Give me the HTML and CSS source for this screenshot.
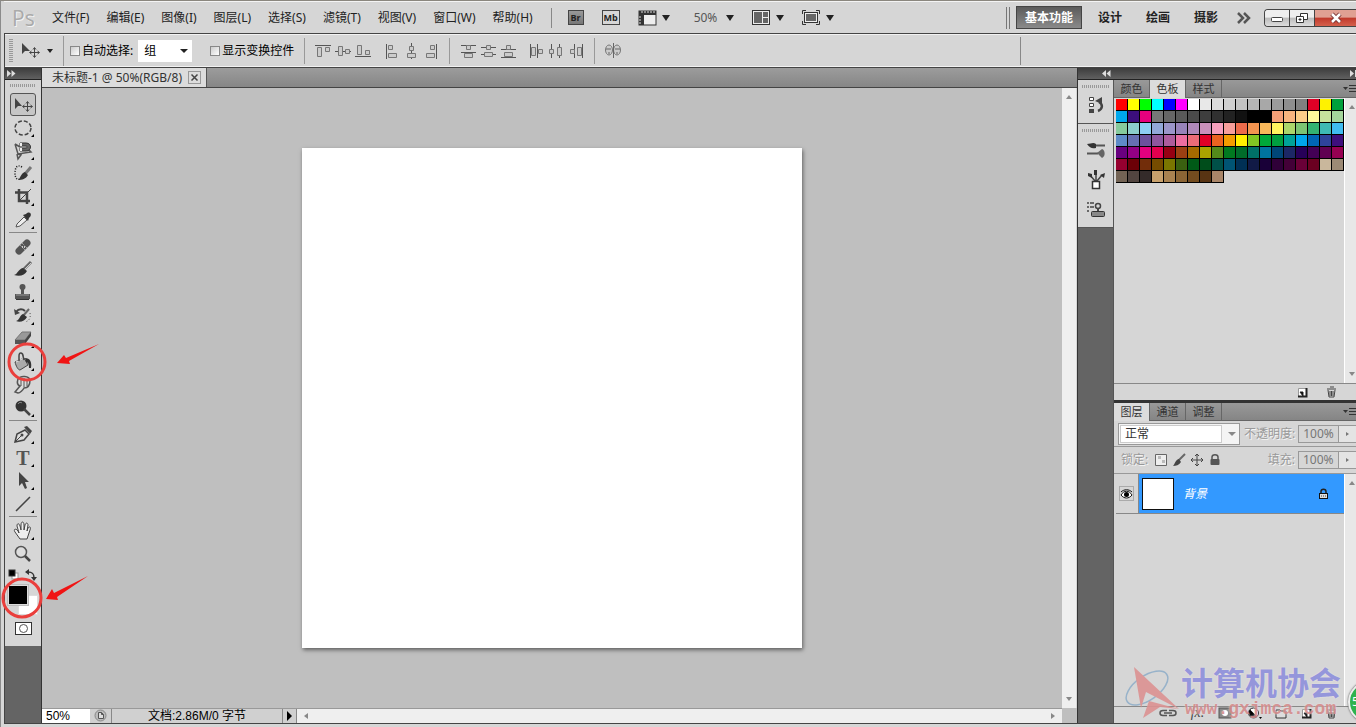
FILE: index.html
```html
<!DOCTYPE html>
<html lang="zh-CN">

<head>
    <meta charset="UTF-8">
    <meta name="viewport" content="width=device-width, initial-scale=1.0">
    <title>未标题-1 @ 50%(RGB/8)</title>

    <link rel="stylesheet" href="styles.css">
</head>

<body>
    <header class="menubar">
        <span class="logo">Ps</span>
        <nav class="menu">
            <a href="#">文件(F)</a>
            <a href="#">编辑(E)</a>
            <a href="#">图像(I)</a>
            <a href="#">图层(L)</a>
            <a href="#">选择(S)</a>
            <a href="#">滤镜(T)</a>
            <a href="#">视图(V)</a>
            <a href="#">窗口(W)</a>
            <a href="#">帮助(H)</a>
        </nav>
        <div class="app-buttons">
            <button class="app-box br">Br</button>
            <button class="app-box mb">Mb</button>
            <button class="drop" aria-label="查看额外内容">
                <svg width="19" height="16" viewBox="0 0 19 16"><rect x="1" y="1" width="17" height="14" fill="#eee" stroke="#333"/><path d="M1 1h17v4H6v10H1z" fill="#333"/><path d="M4 1v2M7 1v2M10 1v2M13 1v2M16 1v2M1 7h2M1 10h2M1 13h2" stroke="#ddd"/></svg>
                <i class="tri"></i>
            </button>
            <button class="drop zoom-level">50% <i class="tri"></i></button>
            <button class="drop" aria-label="排列文档">
                <svg width="19" height="16" viewBox="0 0 19 16"><rect x=".5" y=".5" width="17" height="14" fill="#eee" stroke="#333"/><path d="M2 2h8v11H2zM11 2h5v5h-5zM11 8h5v5h-5z" fill="#666"/></svg>
                <i class="tri"></i>
            </button>
            <button class="drop" aria-label="屏幕模式">
                <svg width="19" height="16" viewBox="0 0 19 16"><path d="M4 .5H.5V4M14 .5h3.500V4M.5 11v3.500H4M17.500 11v3.500H14" fill="none" stroke="#333"/><rect x="2.500" y="2.500" width="13" height="10" fill="#eee" stroke="#333"/><rect x="4" y="4" width="10" height="7" fill="#666"/></svg>
                <i class="tri"></i>
            </button>
        </div>
        <div class="workspaces">
            <button class="active">基本功能</button>
            <button>设计</button>
            <button>绘画</button>
            <button>摄影</button>
            <button class="more" aria-label="更多">
                <svg width="14" height="12" viewBox="0 0 14 12"><path d="M1 1l5 5-5 5M7 1l5 5-5 5" fill="none" stroke="#555" stroke-width="2.500"/></svg>
            </button>
        </div>
        <div class="window-buttons">
            <button aria-label="最小化"><svg width="14" height="12" viewBox="0 0 14 12"><rect x="1.500" y="5.500" width="11" height="4" rx="1" fill="#fff" stroke="#444"/></svg></button>
            <button aria-label="还原"><svg width="14" height="12" viewBox="0 0 14 12"><path d="M5.500 1.500h7v6h-7z" fill="#fff" stroke="#333"/><path d="M1.500 4.500h7v6h-7z" fill="#fff" stroke="#333"/><path d="M4 7h2v1H4z" stroke="#333"/></svg></button>
            <button class="close" aria-label="关闭"><svg width="14" height="12" viewBox="0 0 14 12"><path d="M3 2l8 8M11 2l-8 8" stroke="#733" stroke-width="4.500"/><path d="M3 2l8 8M11 2l-8 8" stroke="#fff" stroke-width="2.500"/></svg></button>
        </div>
    </header>

    <section class="options">
        <span class="grip-v"></span>
        <button class="current-tool" aria-label="移动工具">
            <svg width="20" height="20" viewBox="0 0 20 20"><path d="M1 2v11l3-3h5z" fill="#444"/><path d="M13.500 7v9M9 11.500h9M12 8.500l1.500-2 1.500 2M12 14.500l1.500 2 1.500-2M10.500 10l-2 1.500 2 1.500M16.500 10l2 1.500-2 1.500" fill="none" stroke="#444"/></svg>
            <i class="tri small"></i>
        </button>
        <div class="option-fields">
            <label><input type="checkbox">自动选择:</label>
            <span class="select-wrap auto-select">
                <select aria-label="自动选择"><option>组</option><option>图层</option></select>
                <i class="tri"></i>
            </span>
            <label><input type="checkbox">显示变换控件</label>
        </div>
        <div class="align-group">
            <div class="trio">
                <button aria-label="顶对齐"><svg viewBox="0 0 20 20"><path d="M2 4.500h16" stroke="#555"/><path d="M4.500 6.500h4v9h-4zM12.500 6.500h4v4h-4z"/></svg></button>
                <button aria-label="垂直居中对齐"><svg viewBox="0 0 20 20"><path d="M2 10.500h16" stroke="#555"/><path d="M5.500 5.500h4v9h-4zM12.500 8.500h4v4h-4z"/></svg></button>
                <button aria-label="底对齐"><svg viewBox="0 0 20 20"><path d="M2 15.500h16" stroke="#555"/><path d="M4.500 4.500h4v9h-4zM12.500 9.500h4v4h-4z"/></svg></button>
            </div>
            <div class="trio">
                <button aria-label="左对齐"><svg viewBox="0 0 20 20"><path d="M5.500 3v15" stroke="#555"/><path d="M7.500 4.500h4v4h-4zM7.500 12.500h8v4h-8z"/></svg></button>
                <button aria-label="水平居中对齐"><svg viewBox="0 0 20 20"><path d="M10.500 2v16" stroke="#555"/><path d="M8.500 5.500h4v4h-4zM6.500 12.500h8v4h-8z"/></svg></button>
                <button aria-label="右对齐"><svg viewBox="0 0 20 20"><path d="M15.500 3v15" stroke="#555"/><path d="M9.500 4.500h4v4h-4zM5.500 12.500h8v4h-8z"/></svg></button>
            </div>
        </div>
        <div class="align-group">
            <div class="trio">
                <button aria-label="按顶分布"><svg viewBox="0 0 20 20"><path d="M3 4.500h15M3 11.500h15" stroke="#555"/><path d="M8.500 4.500h4v4h-4zM6.500 12.500h8v4h-8z"/></svg></button>
                <button aria-label="垂直居中分布"><svg viewBox="0 0 20 20"><path d="M3 6.500h15M3 13.500h15" stroke="#555"/><path d="M8.500 4.500h4v4h-4zM6.500 11.500h8v4h-8z"/></svg></button>
                <button aria-label="按底分布"><svg viewBox="0 0 20 20"><path d="M3 8.500h15M3 16.500h15" stroke="#555"/><path d="M8.500 4.500h4v4h-4zM6.500 11.500h8v4h-8z"/></svg></button>
            </div>
            <div class="trio">
                <button aria-label="按左分布"><svg viewBox="0 0 20 20"><path d="M4.500 3v14M11.500 3v14" stroke="#555"/><path d="M5.500 6.500h4v8h-4zM12.500 8.500h4v4h-4z"/></svg></button>
                <button aria-label="水平居中分布"><svg viewBox="0 0 20 20"><path d="M5.500 3v14M13.500 3v14" stroke="#555"/><path d="M3.500 8.500h4v4h-4zM11.500 6.500h4v8h-4z"/></svg></button>
                <button aria-label="按右分布"><svg viewBox="0 0 20 20"><path d="M8.500 3v14M16.500 3v14" stroke="#555"/><path d="M4.500 8.500h4v4h-4zM11.500 6.500h4v8h-4z"/></svg></button>
            </div>
        </div>
        <div class="align-group">
            <button aria-label="自动对齐图层"><svg viewBox="0 0 20 20"><ellipse cx="6" cy="9" rx="3.500" ry="5"/><ellipse cx="14" cy="9" rx="3.500" ry="5"/><path d="M10.500 2v15M3 8h5M12 8h5M5 12h2M13 12h2" stroke="#666"/></svg></button>
        </div>
        <span class="options-end"></span>
    </section>

    <main class="workspace">
        <aside class="toolbox">
            <div class="dark-head"><svg width="9" height="7" viewBox="0 0 9 7"><path d="M0 0l4 3.500L0 7zM4.500 0l4 3.500-4 3.500z" fill="#ddd"/></svg></div>
            <div class="tools">
                <span class="grip-h"></span>
                <div class="tool-group">
                    <button class="tool selected" aria-label="移动"><svg viewBox="0 0 20 20"><path d="M2 3v11l3-3h4z" fill="#444"/><path d="M14.500 7v9M10 11.500h9M13 8.500l1.500-2 1.500 2M13 14.500l1.500 2 1.500-2M11.500 10l-2 1.500 2 1.500M17.500 10l2 1.500-2 1.500" fill="none" stroke="#444"/></svg></button>
                    <button class="tool more-tools" aria-label="选框"><svg viewBox="0 0 20 20"><ellipse cx="10" cy="10" rx="8" ry="7" fill="none" stroke="#444" stroke-width="1.500" stroke-dasharray="4 2"/></svg></button>
                    <button class="tool more-tools" aria-label="套索"><svg viewBox="0 0 20 20"><path d="M2 3l5 3M2 3l3 10 13-2-3-3M5 13l3 1-3 4-1-5" fill="none" stroke="#555" stroke-width="1.500"/><path d="M7 2h6c6 0 6 8 0 8H7V7h5c3 0 3-2 0-2H7z" fill="#666" stroke="#333"/><path d="M7 2h2v3H7zM7 7h2v3H7z" fill="#eee"/></svg></button>
                    <button class="tool more-tools" aria-label="快速选择"><svg viewBox="0 0 20 20"><path d="M9 3c-5-3-7 1-7 6s2 7 5 6" fill="none" stroke="#222" stroke-width="1.500" stroke-dasharray="1 1.500"/><path d="M12 10l6-7" stroke="#777" stroke-width="3"/><path d="M12 8l3 3c-2 4-6 5-10 5 3-2 2-6 7-8z" fill="#333"/></svg></button>
                    <button class="tool more-tools" aria-label="裁剪"><svg viewBox="0 0 20 20"><path d="M2 5.500h12V17M6 2v12h11" fill="none" stroke="#444" stroke-width="2.500"/><path d="M6 14L18 2" stroke="#444"/></svg></button>
                    <button class="tool more-tools" aria-label="吸管"><svg viewBox="0 0 20 20"><path d="M3 17l1-3 7-7 3 3-7 6z" fill="#eee" stroke="#555"/><path d="M10 5l5 6 1-3c4-3 1-8-3-4z" fill="#333"/></svg></button>
                </div>
                <hr>
                <div class="tool-group">
                    <button class="tool more-tools" aria-label="修复画笔"><svg viewBox="0 0 20 20"><path d="M6 14l8-8" stroke="#555" stroke-width="7" stroke-linecap="round"/><path d="M7 8l5 5M9 6l5 5" stroke="#bbb" stroke-dasharray="1 1"/><path d="M9 10h3" stroke="#ccc" stroke-width="2" stroke-dasharray="1 1"/></svg></button>
                    <button class="tool more-tools" aria-label="画笔"><svg viewBox="0 0 20 20"><path d="M10 10l8-8" stroke="#666" stroke-width="3"/><path d="M11 10l7-7" stroke="#ccc"/><path d="M10 8l4 3c-2 4-7 6-13 4 4-1 4-6 9-7z" fill="#333"/></svg></button>
                    <button class="tool more-tools" aria-label="仿制图章"><svg viewBox="0 0 20 20"><circle cx="9.500" cy="4" r="3" fill="#555"/><path d="M8 6h3v5h6v5H2v-5h6z" fill="#555"/><path d="M3 12h13" stroke="#999"/><path d="M3 16.500h13" stroke="#333"/></svg></button>
                    <button class="tool more-tools" aria-label="历史记录画笔"><svg viewBox="0 0 20 20"><path d="M3 6c3-4 7-3 9-1" fill="none" stroke="#444" stroke-width="2"/><path d="M1 3l1 6 5-2z" fill="#444"/><path d="M10 10l6-7" stroke="#666" stroke-width="2"/><path d="M10 8l4 3c-2 4-7 6-11 4 4-1 3-5 7-7z" fill="#333"/><path d="M17 7c1 5-1 8-5 9" fill="none" stroke="#555" stroke-dasharray="1 2"/></svg></button>
                    <button class="tool more-tools" aria-label="橡皮擦"><svg viewBox="0 0 20 20"><path d="M9 3h9l-6 8H2z" fill="#999" stroke="#777"/><path d="M2 11h10v4H2z" fill="#555"/><path d="M12 11l6-8v4l-6 8z" fill="#444"/></svg></button>
                    <button class="tool more-tools" aria-label="油漆桶"><svg viewBox="0 0 20 20"><path d="M2 10l9-4 4 7-8 5c-2 0-4-4-5-8z" fill="#aaa" stroke="#444"/><path d="M3 10l8-4" stroke="#eee"/><path d="M6 9V4c0-5 4-3 4 0l1 4" fill="none" stroke="#444" stroke-width="1.500"/><path d="M12 6c5 0 7 4 6 10h-2c0-4-1-6-3-6z" fill="#333"/></svg></button>
                    <button class="tool more-tools" aria-label="涂抹"><svg viewBox="0 0 20 20"><path d="M2 17l5-6c-3-1-3-4-2-7 3-4 11-3 12 1 0 6-2 8-6 8-1 2-4 5-6 5z" fill="#ddd" stroke="#555" stroke-width="1.500"/><path d="M8 4v7M11 3v9M14 4v7" stroke="#555"/></svg></button>
                    <button class="tool more-tools" aria-label="减淡"><svg viewBox="0 0 20 20"><circle cx="8" cy="8" r="5.500" fill="#333"/><path d="M11 11l6 6" stroke="#444" stroke-width="2.500"/><path d="M5 6c1-2 3-2 4-1" fill="none" stroke="#888"/></svg></button>
                </div>
                <hr>
                <div class="tool-group">
                    <button class="tool more-tools" aria-label="钢笔"><svg viewBox="0 0 20 20"><path d="M2 17l2-8 8-4 4 4-5 6z" fill="#ddd" stroke="#444" stroke-width="1.500"/><path d="M2 17l6-6" stroke="#444"/><circle cx="9" cy="10" r="1.500" fill="#444"/><path d="M11 2l3-1 5 5-2 3z" fill="#444"/></svg></button>
                    <button class="tool more-tools type-tool" aria-label="文字">T</button>
                    <button class="tool more-tools" aria-label="路径选择"><svg viewBox="0 0 20 20"><path d="M6 1v14l3-3 3 6 2-1-2-6h4z" fill="#444"/></svg></button>
                    <button class="tool more-tools" aria-label="直线"><svg viewBox="0 0 20 20"><path d="M3 17L17 3" stroke="#444" stroke-width="1.500"/></svg></button>
                </div>
                <hr>
                <div class="tool-group">
                    <button class="tool more-tools" aria-label="抓手"><svg viewBox="0 0 20 20"><path d="M7 18l-5-7c-2-3 1-4 3-1l1 2-2-7c0-3 2-3 3 0l1 4V4c0-4 3-4 3 0v5l1-5c1-3 3-2 3 0l-1 6 1-3c2-2 3-1 2 2l-3 9z" fill="#eee" stroke="#444"/></svg></button>
                    <button class="tool" aria-label="缩放"><svg viewBox="0 0 20 20"><circle cx="8" cy="8" r="5.500" fill="#ddd" stroke="#555" stroke-width="1.500"/><path d="M12 12l5 5" stroke="#444" stroke-width="2.500"/></svg></button>
                </div>
                <div class="color-mini">
                    <svg width="11" height="11" viewBox="0 0 11 11"><rect x="4" y="4" width="6" height="6" fill="#fff" stroke="#999"/><rect x="1" y="1" width="6" height="6" stroke="#333"/></svg>
                    <svg width="12" height="12" viewBox="0 0 12 12"><path d="M3 3c5 0 6 2 6 6" fill="none" stroke="#333" stroke-width="1.500"/><path d="M0 3l4-3v6zM6 8h6l-3 4z" fill="#333"/></svg>
                </div>
                <div class="color-chips">
                    <button class="chip back" aria-label="背景色"></button>
                    <button class="chip front" aria-label="前景色"></button>
                </div>
                <button class="quick-mask" aria-label="快速蒙版"><svg width="11" height="11" viewBox="0 0 11 11"><circle cx="5.500" cy="5.500" r="4" fill="none" stroke="#555"/></svg></button>
            </div>
            <svg class="note note-bucket" width="100" height="48" viewBox="0 0 100 48"><circle cx="26" cy="25" r="18" fill="none" stroke="#ea3f3c" stroke-width="3"/><path d="M56 26l7-8 2 3 33-14-30 17 1 3z" fill="#f01414"/></svg>
            <svg class="note note-color" width="100" height="48" viewBox="0 0 100 48"><circle cx="22" cy="26" r="19" fill="none" stroke="#ea3f3c" stroke-width="3"/><path d="M46 27l6-10 2 4 34-17-31 21 1 3z" fill="#f01414"/></svg>
        </aside>

        <section class="document">
            <div class="doc-tabs">
                <div class="doc-tab">未标题-1 @ 50%(RGB/8)
                    <button aria-label="关闭文档"><svg width="11" height="11" viewBox="0 0 11 11"><path d="M2.500 2.500l6 6M8.500 2.500l-6 6" stroke="#444" stroke-width="1.500"/></svg></button>
                </div>
            </div>
            <div class="doc-body">
                <div class="canvas"><div class="sheet"></div></div>
                <div class="scroll-v"><i class="up"></i><i class="down"></i></div>
            </div>
            <div class="status">
                <input class="status-zoom" type="text" value="50%" aria-label="缩放比例">
                <span class="status-icon"><svg width="13" height="13" viewBox="0 0 13 13"><circle cx="6.500" cy="6.500" r="5.500" fill="#bbb" stroke="#888"/><path d="M4.500 3.500h3l2 2v4h-5zM7.500 3.500v2h2" fill="#ddd" stroke="#555"/></svg></span>
                <span class="status-info">文档:2.86M/0 字节</span>
                <button class="status-more" aria-label="状态选项"><svg width="6" height="10" viewBox="0 0 6 10"><path d="M0 0l5 5-5 5z"/></svg></button>
                <div class="scroll-h"><i class="left"></i><i class="right"></i></div>
            </div>
        </section>

        <aside class="right-side">
            <div class="dark-head right-head">
                <svg width="9" height="7" viewBox="0 0 9 7"><path d="M4 0L0 3.500 4 7zM8.500 0l-4 3.500 4 3.500z" fill="#ddd"/></svg>
                <svg width="6" height="7" viewBox="0 0 6 7"><path d="M0 0l4 3.500L0 7zM5 0h1v7H5z" fill="#ddd"/></svg>
            </div>
            <div class="right-body">
                <div class="dock">
                    <div class="dock-group">
                        <span class="grip-h"></span>
                        <button aria-label="历史记录"><svg viewBox="0 0 20 20"><path d="M3.500 2.500h4v3h-4zM3.500 8.500h4v3h-4z" fill="#fff" stroke="#444"/><path d="M3 14h5v4H3z" fill="#444"/><path d="M12 16c5-2 5-7 1-9" fill="none" stroke="#444" stroke-width="2.500"/><path d="M9 6l7-4v7z" fill="#444"/></svg></button>
                    </div>
                    <div class="dock-group">
                        <span class="grip-h"></span>
                        <button aria-label="画笔"><svg viewBox="0 0 20 20"><path d="M8 5.500h11M1 13.500h11" stroke="#555" stroke-width="2"/><path d="M1 4c4 0 6-2 9 0v4c-4 1-6 0-9-4z" fill="#333"/><path d="M11 13l5-4c3 1 4 7 0 9z" fill="#666"/></svg></button>
                        <button aria-label="画笔预设"><svg viewBox="0 0 20 20"><path d="M9 11L4 5M10 11V3M11 11l5-6" stroke="#444" stroke-width="1.500"/><path d="M2 3l4 1v4L2 6zM8 0h3v5H8zM14 5l5-2-1 5z" fill="#333"/><path d="M6.500 11.500h7v7h-7z" fill="#fff" stroke="#333" stroke-width="1.500"/></svg></button>
                        <button aria-label="仿制源"><svg viewBox="0 0 20 20"><path d="M1 3h2M4 3h4M1 7h2M4 7h4M1 11h2" stroke="#444" stroke-width="1.500"/><circle cx="12" cy="6" r="2.500" fill="none" stroke="#444" stroke-width="1.500"/><path d="M12 8v4" stroke="#444" stroke-width="2"/><rect x="5.500" y="11.500" width="13" height="5" rx="1" fill="#888" stroke="#333"/></svg></button>
                    </div>
                </div>
                <div class="panels">
                    <section class="panel">
                        <div class="tabs">
                            <button>颜色</button>
                            <button class="active">色板</button>
                            <button>样式</button>
                            <svg class="panel-menu" width="13" height="8" viewBox="0 0 13 8"><path d="M0 2h5L2.500 5z" fill="#333"/><path d="M6 .5h7M6 3.500h7M6 6.500h7" stroke="#333"/></svg>
                        </div>
                        <div class="panel-body">
                            <div class="swatches" id="swatches"></div>
                            <div class="scroll-v narrow"><i class="up"></i><i class="down"></i></div>
                        </div>
                        <div class="panel-foot swatch-foot">
                            <button aria-label="新建色板"><svg width="11" height="11" viewBox="0 0 11 11"><path d="M1.500 1.500h8v8h-8z" fill="#fff" stroke="#999"/><path d="M9.500 1v8.500H1" fill="none" stroke="#222" stroke-width="2"/><path d="M3 5h3v4z" stroke="#222"/></svg></button>
                            <button aria-label="删除色板"><svg width="11" height="12" viewBox="0 0 11 12"><path d="M1 3h9M4 1h4M2 4l1 7h5l1-7M4 5v5M5.500 5v5M7 5v5" fill="none" stroke="#444"/></svg></button>
                        </div>
                    </section>
                    <section class="panel layers">
                        <div class="tabs">
                            <button class="active">图层</button>
                            <button>通道</button>
                            <button>调整</button>
                            <svg class="panel-menu" width="13" height="8" viewBox="0 0 13 8"><path d="M0 2h5L2.500 5z" fill="#333"/><path d="M6 .5h7M6 3.500h7M6 6.500h7" stroke="#333"/></svg>
                        </div>
                        <div class="layer-row blend-row">
                            <span class="select-wrap blend">
                                <select aria-label="混合模式"><option>正常</option><option>溶解</option></select>
                                <i class="tri"></i>
                            </span>
                            <label for="opacity">不透明度:</label>
                            <span class="percent"><input id="opacity" type="text" value="100%"><button aria-label="调整不透明度"><i></i></button></span>
                        </div>
                        <div class="layer-row lock-row">
                            <span class="lock-label">锁定:</span>
                            <div class="locks">
                                <button aria-label="锁定透明像素"><svg viewBox="0 0 14 14"><path d="M1.500 1.500h11v11h-11z" fill="#eee" stroke="#666"/><path d="M4 3h3v3H4zM8 7h3v3H8z" fill="#bbb"/></svg></button>
                                <button aria-label="锁定图像像素"><svg viewBox="0 0 14 14"><path d="M6 8l7-7" stroke="#666" stroke-width="2"/><path d="M7 6l2 3c-2 3-5 4-8 4 2-2 2-6 6-7z" fill="#444"/></svg></button>
                                <button aria-label="锁定位置"><svg viewBox="0 0 14 14"><path d="M7 1v12M1 7h12M5 3l2-2 2 2M5 11l2 2 2-2M3 5L1 7l2 2M11 5l2 2-2 2" fill="none" stroke="#444"/></svg></button>
                                <button aria-label="锁定全部"><svg viewBox="0 0 14 14"><path d="M4 7V4c0-3 6-3 6 0v3" fill="none" stroke="#555" stroke-width="1.500"/><rect x="2.500" y="6" width="9" height="6" rx="1" fill="#555"/></svg></button>
                            </div>
                            <label for="fill">填充:</label>
                            <span class="percent"><input id="fill" type="text" value="100%"><button aria-label="调整填充"><i></i></button></span>
                        </div>
                        <div class="panel-body">
                            <div class="layer-list">
                                <div class="layer">
                                    <button class="eye" aria-label="可见性"><svg width="13" height="10" viewBox="0 0 13 10"><path d="M1 6c3-5 8-5 11 0-3 4-8 4-11 0z" fill="#fff" stroke="#111"/><circle cx="6.500" cy="5.500" r="2.500"/><path d="M1 3c3-3 8-3 11 0" fill="none" stroke="#111"/></svg></button>
                                    <div class="layer-main">
                                        <span class="thumb"></span>
                                        <span class="layer-name">背景</span>
                                        <svg width="11" height="12" viewBox="0 0 11 12"><path d="M3 5V3.500c0-3 5-3 5 0V5" fill="none" stroke="#222" stroke-width="1.500"/><rect x="1.500" y="5.500" width="8" height="5" fill="#ddd" stroke="#111"/><path d="M3 8h5" stroke="#444" stroke-dasharray="1 1"/></svg>
                                    </div>
                                </div>
                            </div>
                            <div class="scroll-v narrow"><i class="up"></i></div>
                        </div>
                        <div class="panel-foot layer-foot">
                            <button aria-label="链接图层"><svg width="18" height="12" viewBox="0 0 18 12"><path d="M8 3.500H4c-4 0-4 5 0 5h4M10 3.500h4c4 0 4 5 0 5h-4M5 6h8" fill="none" stroke="#555" stroke-width="1.500"/></svg></button>
                            <button class="fx">fx.</button>
                            <button aria-label="蒙版"><svg width="15" height="12" viewBox="0 0 15 12"><rect x="1" y="1" width="12" height="10" fill="#888" stroke="#555"/><circle cx="7" cy="6" r="3" fill="#fff"/></svg></button>
                            <button aria-label="调整图层"><svg width="15" height="12" viewBox="0 0 15 12"><circle cx="6.500" cy="6" r="5" fill="#fff" stroke="#222"/><path d="M3 2.500l7 7A5 5 0 0 1 3 2.500z"/><path d="M12 10h3l-1.500 2z"/></svg></button>
                            <button aria-label="新建组"><svg width="12" height="12" viewBox="0 0 12 12"><path d="M1 3h4l1 1h5v7H1z" fill="#ddd" stroke="#333"/></svg></button>
                            <button aria-label="新建图层"><svg width="11" height="11" viewBox="0 0 11 11"><path d="M1.500 1.500h8v8h-8z" fill="#fff" stroke="#999"/><path d="M9.500 1v8.500H1" fill="none" stroke="#222" stroke-width="2"/><path d="M3 5h3v4z" stroke="#222"/></svg></button>
                            <button aria-label="删除图层"><svg width="11" height="12" viewBox="0 0 11 12"><path d="M1 3h9M4 1h4M2 4l1 7h5l1-7M4 5v5M5.500 5v5M7 5v5" fill="none" stroke="#444"/></svg></button>
                        </div>
                    </section>
                </div>
            </div>
        </aside>
    </main>

    <div class="watermark">
        <svg width="56" height="59" viewBox="0 0 56 59"><ellipse cx="22" cy="24" rx="24" ry="12" transform="rotate(-35 22 24)" fill="none" stroke="#91afc9" stroke-width="1.500"/><path d="M9 3l45 42-33-17-5 16z" fill="#dc9292"/><path d="M24 37l30 8-19-2-17 11z" fill="#dc9292"/></svg>
        <div class="watermark-text">
            <span class="club">计算机协会</span>
            <span class="site">www.gxjmca.com</span>
        </div>
    </div>
    <div class="badge">5</div>

    <script src="script.js"></script>
</body>

</html>
```
FILE: styles.css
```css
* {
    box-sizing: border-box;
}

body {
    margin: 0;
    height: 100vh;
    min-height: 700px;
    display: flex;
    flex-direction: column;
    position: relative;
    overflow: hidden;
    border-top: 1px solid #8b877f;
    border-left: 1px solid #8b8b8b;
    padding: 0 0 3px 3px;
    background-color: #d6d6d6;
    color: #222;
    font-family: "Noto Sans", "Noto Sans CJK SC", sans-serif;
    font-size: 12px;
    line-height: 16px;
}

button,
input,
select {
    font: inherit;
    color: inherit;
    margin: 0;
    padding: 0;
    border: none;
    border-radius: 0;
    background: none;
    appearance: none;
}

button {
    display: flex;
    align-items: center;
    justify-content: center;
}

svg {
    display: block;
    flex: none;
}

.tri {
    border: 4px solid transparent;
    border-top: 6px solid #222;
    border-bottom: none;
}

.tri.small {
    border-width: 4px 3px 0;
}

/* menu bar */
.menubar {
    flex: none;
    height: 32px;
    display: flex;
    align-items: center;
    border-top: 1px solid #f4f4f4;
}

.logo {
    width: 48px;
    padding-left: 8px;
    font-family: "Open Sans", sans-serif;
    font-size: 21px;
    color: #aaa;
    text-shadow: 1px 1px 0 #f4f4f4;
}

.menu {
    display: flex;
    gap: 17px;
    padding-right: 18px;
    border-right: 1px solid #888;
    line-height: 20px;
    white-space: nowrap;
}

.menu a {
    color: #222;
    text-decoration: none;
}

.app-buttons {
    display: flex;
    align-items: center;
    gap: 18px;
    padding-left: 16px;
}

.app-box {
    width: 18px;
    height: 15px;
    border: 1px solid #444;
    font-family: "Open Sans", sans-serif;
    font-size: 9px;
    font-weight: bold;
    line-height: 12px;
}

.br {
    width: 16px;
    background: linear-gradient(#999, #777);
}

.drop {
    gap: 5px;
}

.zoom-level {
    gap: 9px;
    margin-left: 6px;
    color: #555;
}

.workspaces {
    display: flex;
    align-items: center;
    margin-left: auto;
    padding-left: 6px;
    border-left: 4px double #777;
    font-weight: bold;
    height: 22px;
}

.workspaces button {
    height: 23px;
    padding: 0 12px;
}

.workspaces .active {
    width: 66px;
    padding: 0;
    margin-right: 4px;
    color: #fff;
    background: linear-gradient(#5b5b5b, #8a8a8a);
    border: 1px solid #444;
}

.workspaces .more {
    padding: 0 13px 0 7px;
}

.window-buttons {
    display: flex;
    height: 18px;
    border: 1px solid #444;
    border-right: none;
    border-radius: 4px 0 0 4px;
    overflow: hidden;
}

.window-buttons button {
    width: 25px;
    background: linear-gradient(#eee 45%, #bbb 50%, #ddd);
    border-right: 1px solid #444;
}

.window-buttons .close {
    width: 41px;
    border: none;
    background: linear-gradient(#e0a093 45%, #c0392b 50%, #d4604c);
}

/* tool options */
.options {
    flex: none;
    height: 34px;
    display: flex;
    align-items: center;
    border-top: 1px solid #444;
    border-left: 1px solid #444;
    box-shadow: inset 0 1px #f2f2f2, inset 0 -1px #f2f2f2;
    color: #000;
}

.grip-v {
    width: 4px;
    height: 24px;
    margin: 0 7px 0 4px;
    background: repeating-linear-gradient(#999 0 1px, transparent 1px 2px);
}

.current-tool {
    gap: 6px;
    height: 30px;
    padding: 0 10px 0 1px;
    border-right: 1px solid #999;
}

.option-fields {
    display: flex;
    align-items: center;
    height: 26px;
    padding: 0 10px 0 6px;
    border-right: 1px solid #999;
}

.option-fields label {
    display: flex;
    align-items: center;
    gap: 2px;
}

.option-fields input {
    width: 10px;
    height: 10px;
    border: 1px solid #888;
    background: linear-gradient(135deg, #ccc, #fff);
}

.select-wrap {
    position: relative;
    display: flex;
}

.select-wrap select {
    width: 100%;
}

.select-wrap .tri {
    position: absolute;
    right: 4px;
    top: 50%;
    margin-top: -2px;
    border-top-width: 4px;
    pointer-events: none;
}

.auto-select {
    width: 54px;
    height: 22px;
    margin: 0 18px 0 5px;
    background-color: #fff;
}

.auto-select select {
    padding-left: 6px;
}

.align-group {
    display: flex;
    align-items: center;
    gap: 8px;
    height: 26px;
    padding: 0 8px;
    border-right: 1px solid #999;
}

.align-group:last-of-type {
    border-right: none;
}

.trio {
    display: flex;
}

.align-group button,
.align-group svg {
    width: 20px;
    height: 20px;
}

.align-group svg {
    fill: #ccc;
    stroke: #777;
}

.options-end {
    height: 28px;
    margin-left: auto;
    margin-right: 335px;
    border-left: 1px solid #888;
}

/* workspace */
.workspace {
    flex: 1;
    min-height: 0;
    display: flex;
    border: 1px solid #444;
    border-right: none;
}

.dark-head {
    flex: none;
    height: 12px;
    padding: 2px;
    background: linear-gradient(#3d3d3d, #606060);
    border-bottom: 1px solid #222;
}

.grip-h {
    display: block;
    height: 3px;
    background: repeating-linear-gradient(90deg, #999 0 1px, transparent 1px 2px);
}

.toolbox {
    position: relative;
    flex: none;
    width: 37px;
    background-color: #646464;
    border-right: 1px solid #333;
}

.tools {
    height: 566px;
    background-color: #d6d6d6;
}

.tools .grip-h {
    margin: 0 5px;
    border-top: 4px solid #d6d6d6;
    height: 7px;
}

.tool-group {
    display: flex;
    flex-direction: column;
    align-items: center;
}

.grip-h + .tool-group {
    padding-top: 6px;
}

.tools hr {
    margin: 1px 4px 2px;
    border: none;
    border-top: 1px solid #888;
}

.tool {
    position: relative;
    width: 26px;
    height: 23px;
}

.tool svg {
    width: 20px;
    height: 20px;
}

.selected {
    border: 1px solid #555;
    border-radius: 3px;
    background-color: #c6c6c6;
}

.more-tools::after {
    content: "";
    position: absolute;
    right: 2px;
    bottom: 2px;
    border-left: 3px solid transparent;
    border-bottom: 3px solid #000;
}

.type-tool {
    font-family: "Liberation Serif", serif;
    font-size: 20px;
    font-weight: bold;
    color: #555;
}

.color-mini {
    display: flex;
    justify-content: space-between;
    height: 20px;
    padding: 4px 4px 0 3px;
}

.color-chips {
    display: grid;
    grid-template-columns: 10px 10px 10px;
    grid-template-rows: 10px 10px 10px;
    padding-left: 3px;
}

.chip {
    border: 1px solid #ddd;
}

.back {
    grid-area: 2 / 2 / 4 / 4;
    background-color: #fff;
}

.front {
    grid-area: 1 / 1 / 3 / 3;
    background-color: #000;
    box-shadow: 0 0 0 1px #bbb;
}

.quick-mask {
    width: 17px;
    height: 13px;
    margin: 7px auto 0;
    background-color: #fff;
    border: 1px solid #333;
}

/* red marks over the paint bucket and the colour chips */
.note {
    position: absolute;
    left: -5px;
    z-index: 2;
    pointer-events: none;
}

.note-bucket {
    left: -4px;
    top: 269px;
}

.note-color {
    top: 504px;
}

/* document */
.document {
    flex: 1;
    min-width: 0;
    display: flex;
    flex-direction: column;
    background-color: #bfbfbf;
}

.doc-tabs {
    flex: none;
    height: 20px;
    display: flex;
    background: linear-gradient(#9c9c9c, #868686);
    border-bottom: 1px solid #444;
}

.doc-tab {
    display: flex;
    align-items: center;
    gap: 6px;
    padding: 0 5px 0 10px;
    background-color: #dcdcdc;
    border-right: 1px solid #555;
    color: #333;
    white-space: nowrap;
}

.doc-tab button {
    border: 1px solid #999;
}

.doc-body {
    flex: 1;
    min-height: 0;
    display: flex;
}

.canvas {
    flex: 1;
    display: flex;
    align-items: center;
    justify-content: center;
}

.sheet {
    width: 500px;
    aspect-ratio: 1;
    background-color: #fff;
    box-shadow: 1px 2px 4px rgba(0, 0, 0, 0.5);
}

.scroll-v {
    flex: none;
    width: 15px;
    display: flex;
    flex-direction: column;
    align-items: center;
    padding: 7px 0;
    background-color: #efefef;
    border-right: 1px solid #d6d6d6;
}

.narrow {
    width: 12px;
    border-left: 1px solid #fff;
    border-right: none;
    padding-left: 3px;
    background-color: #e8e8e8;
}

.up,
.down {
    border: 3px solid transparent;
}

.up {
    border-top: none;
    border-bottom: 4px solid #888;
}

.down {
    margin-top: auto;
    border-bottom: none;
    border-top: 4px solid #888;
}

.status {
    flex: none;
    height: 15px;
    display: flex;
    margin-right: 15px;
    background-color: #d0d0d0;
    border-top: 1px solid #999;
    font-family: "Liberation Sans", "Noto Sans CJK SC", sans-serif;
    line-height: 14px;
    color: #000;
}

.status-zoom {
    width: 48px;
    padding-left: 4px;
    background-color: #fff;
}

.status-icon {
    width: 22px;
    padding-left: 4px;
    border-right: 1px solid #888;
}

.status-info {
    width: 171px;
    text-align: center;
    border-right: 1px solid #888;
}

.status-more {
    width: 14px;
    border-right: 1px solid #888;
}

.scroll-h {
    flex: 1;
    display: flex;
    align-items: center;
    justify-content: space-between;
    padding: 0 7px;
    background-color: #efefef;
}

.left,
.right {
    border: 3px solid transparent;
}

.left {
    border-left: none;
    border-right: 4px solid #888;
}

.right {
    border-right: none;
    border-left: 4px solid #888;
}

/* right side */
.right-side {
    flex: none;
    width: 279px;
    display: flex;
    flex-direction: column;
    border-left: 1px solid #333;
}

.right-head {
    display: flex;
    justify-content: space-between;
    padding: 2px 0 2px 24px;
}

.right-body {
    flex: 1;
    min-height: 0;
    display: flex;
}

.dock {
    flex: none;
    width: 36px;
    background-color: #646464;
    border-right: 1px solid #555;
}

.dock-group {
    display: flex;
    flex-direction: column;
    align-items: center;
    padding: 5px 4px 2px;
    background-color: #d6d6d6;
    border-bottom: 1px solid #555;
}

.dock-group .grip-h {
    width: 27px;
}

.dock-group button {
    height: 30px;
}

.dock-group:first-child button {
    height: 33px;
}

.dock-group + .dock-group .grip-h {
    margin-bottom: 3px;
}

.dock-group svg {
    width: 20px;
    height: 20px;
}

.panels {
    flex: 1;
    min-width: 0;
    display: flex;
    flex-direction: column;
    background-color: #d6d6d6;
}

.panel {
    display: flex;
    flex-direction: column;
    height: 323px;
    border-bottom: 3px solid #333;
}

.layers {
    flex: 1;
    height: auto;
    border: none;
}

.tabs {
    flex: none;
    display: flex;
    align-items: center;
    height: 18px;
    background: linear-gradient(#999, #858585);
    border-bottom: 1px solid #666;
}

.tabs button {
    width: 36px;
    height: 17px;
    border-right: 1px solid #666;
    color: #333;
    font-size: 11px;
}

.tabs .active {
    height: 18px;
    background-color: #dcdcdc;
    margin-bottom: -1px;
}

.panel-menu {
    margin-left: auto;
}

.panel-body {
    flex: 1;
    display: flex;
    padding-left: 2px;
}

.swatches {
    flex: 1;
    display: grid;
    grid-template-columns: repeat(19, 12px);
    grid-auto-rows: 12px;
    align-content: start;
    padding-top: 1px;
}

.swatch {
    border-right: 1px solid #000;
    border-bottom: 1px solid #000;
}

.panel-foot {
    flex: none;
    display: flex;
    align-items: center;
    border-top: 1px solid #888;
}

.swatch-foot {
    height: 17px;
    justify-content: flex-end;
    gap: 18px;
    padding-right: 19px;
}

.layer-row {
    flex: none;
    display: flex;
    align-items: center;
    height: 26px;
    padding-left: 4px;
    border-bottom: 1px solid #999;
    color: #999;
    text-shadow: 1px 1px 0 #f4f4f4;
    white-space: nowrap;
}

.lock-row {
    height: 27px;
    padding-left: 7px;
}

.blend {
    flex: none;
    width: 122px;
    height: 22px;
    margin-right: 4px;
    background-color: #f4f4f4;
    border: 1px solid #999;
    color: #333;
}

.blend select {
    margin: 1px 17px 1px 1px;
    padding-left: 4px;
    background-color: #fff;
    border: 1px solid #ccc;
}

.blend .tri {
    border-top-color: #888;
    right: 3px;
}

.layer-row label {
    margin-left: auto;
}

.percent {
    flex: none;
    display: flex;
    height: 18px;
    margin-left: 3px;
    border: 1px solid #999;
    border-right: none;
    color: #777;
}

.percent input {
    width: 40px;
    padding-left: 4px;
    border-right: 1px solid #999;
}

.percent button {
    width: 17px;
    background-color: #e4e4e4;
}

.percent i {
    border: 2px solid transparent;
    border-left: 3px solid #777;
    border-right: none;
}

.locks {
    display: flex;
    gap: 4px;
    padding-left: 6px;
}

.locks svg {
    width: 14px;
    height: 14px;
}

.layer-list {
    flex: 1;
}

.layer {
    display: flex;
    height: 40px;
    border-bottom: 1px solid #888;
}

.eye {
    width: 15px;
    height: 15px;
    margin: auto 4px auto 3px;
    border: 1px solid #aaa;
}

.layer-main {
    flex: 1;
    display: flex;
    align-items: center;
    gap: 9px;
    padding: 0 15px 0 3px;
    border-left: 1px solid #888;
    background-color: #3399ff;
    color: #fff;
}

.thumb {
    width: 32px;
    height: 32px;
    background-color: #fff;
    border: 1px solid #111;
}

.layer-name {
    flex: 1;
    font-style: italic;
}

.layer-foot {
    height: 17px;
    justify-content: space-between;
    padding: 0 19px 4px 45px;
}

.fx {
    font-family: "Liberation Serif", serif;
    font-size: 14px;
    font-style: italic;
    color: #444;
}

/* club mark */
.watermark {
    position: absolute;
    right: 15px;
    bottom: 4px;
    display: flex;
    opacity: 0.9;
    pointer-events: none;
}

.watermark-text {
    display: flex;
    flex-direction: column;
    padding-top: 2px;
    text-shadow: 0 0 2px #f0e8ee;
    font-weight: bold;
}

.club {
    font-size: 32px;
    line-height: 34px;
    color: #8f90dc;
}

.site {
    padding-left: 4px;
    font-family: "Liberation Mono", monospace;
    font-size: 18px;
    line-height: 18px;
    color: #d48c8c;
}

.badge {
    position: absolute;
    right: -34px;
    bottom: 4px;
    width: 42px;
    height: 42px;
    padding-left: 2px;
    border: 2px solid #eee;
    border-radius: 50%;
    box-shadow: 0 0 2px #333;
    background-color: #2eb24e;
    color: #fff;
    line-height: 38px;
}
```
FILE: script.js
```js
const swatchColors = [
    'ff0000 ffff00 00ff00 00ffff 0000ff ff00ff ffffff e8e8e8 dcdcdc cfcfcf c2c2c2 b5b5b5 a8a8a8 9b9b9b 8e8e8e 808080 e00026 fff200 00a03c',
    '00a8ec 3c0f7c e6007e 777777 666666 595959 4b4b4b 3e3e3e 303030 222222 111111 000000 000000 f5a077 f8b47e fbcd88 fff99c c6e39c a5d69c',
    '86cb9c 8bcecb 8dcff4 92a8d8 9b95c9 9883ba af88ba c990ba f69fbd f69d9a ec6b4b f39450 f8b85a fff45f abd56b 7cc473 33b371 3ebab4 40bcf0',
    '5e8bc8 666fb2 6c519d 8f569e ae5b9c ec6d9f ec6b77 e00026 eb6220 f39c00 ffef00 81c723 00a93a 009e3f 00a299 00a7ec 0066b5 2f439a 3e0f7c',
    '690080 930084 e4007e e4004f 960012 9c4012 a46a00 aaa300 54891a 007920 006c2a 007067 00749f 004677 1c2765 270058 430055 600051 960051',
    '96002f 6c0007 722d0a 764c00 7a7600 3a6010 005a17 004d1b 005048 005474 003055 111a46 190038 2f0038 430037 6a0037 6b0021 c9b79c 9c8a75',
    '736354 524540 342b2a c8a16c a98250 8b6535 734c1f 583413 a98568'
];

const swatches = document.getElementById('swatches');

swatchColors.join(' ').split(' ').forEach(color => {
    const swatch = document.createElement('button');
    swatch.className = 'swatch';
    swatch.style.backgroundColor = '#' + color;
    swatch.setAttribute('aria-label', '#' + color);
    swatches.appendChild(swatch);
});
```
